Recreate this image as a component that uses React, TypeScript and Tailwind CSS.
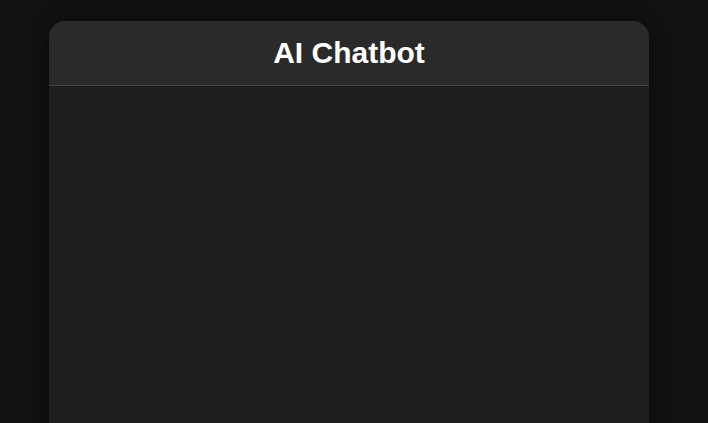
export default function App() {
  return (
    <div className="min-h-screen bg-[#121212] pt-[21px] pl-[49px] overflow-hidden" style={{ height: 423 }}>
      <div className="w-[600px] h-[600px] rounded-t-[16px] rounded-b-[16px] bg-[#1e1e1e] shadow-[0_0_20px_rgba(0,0,0,0.5)] overflow-hidden">
        <div className="h-[65px] pb-[2px] bg-[#2a2a2a] border-b border-[#444] flex items-center justify-center">
          <h1 className="text-[30px] font-bold text-white" style={{ fontFamily: '"Liberation Sans", Arial, sans-serif' }}>
            AI Chatbot
          </h1>
        </div>
      </div>
    </div>
  );
}
